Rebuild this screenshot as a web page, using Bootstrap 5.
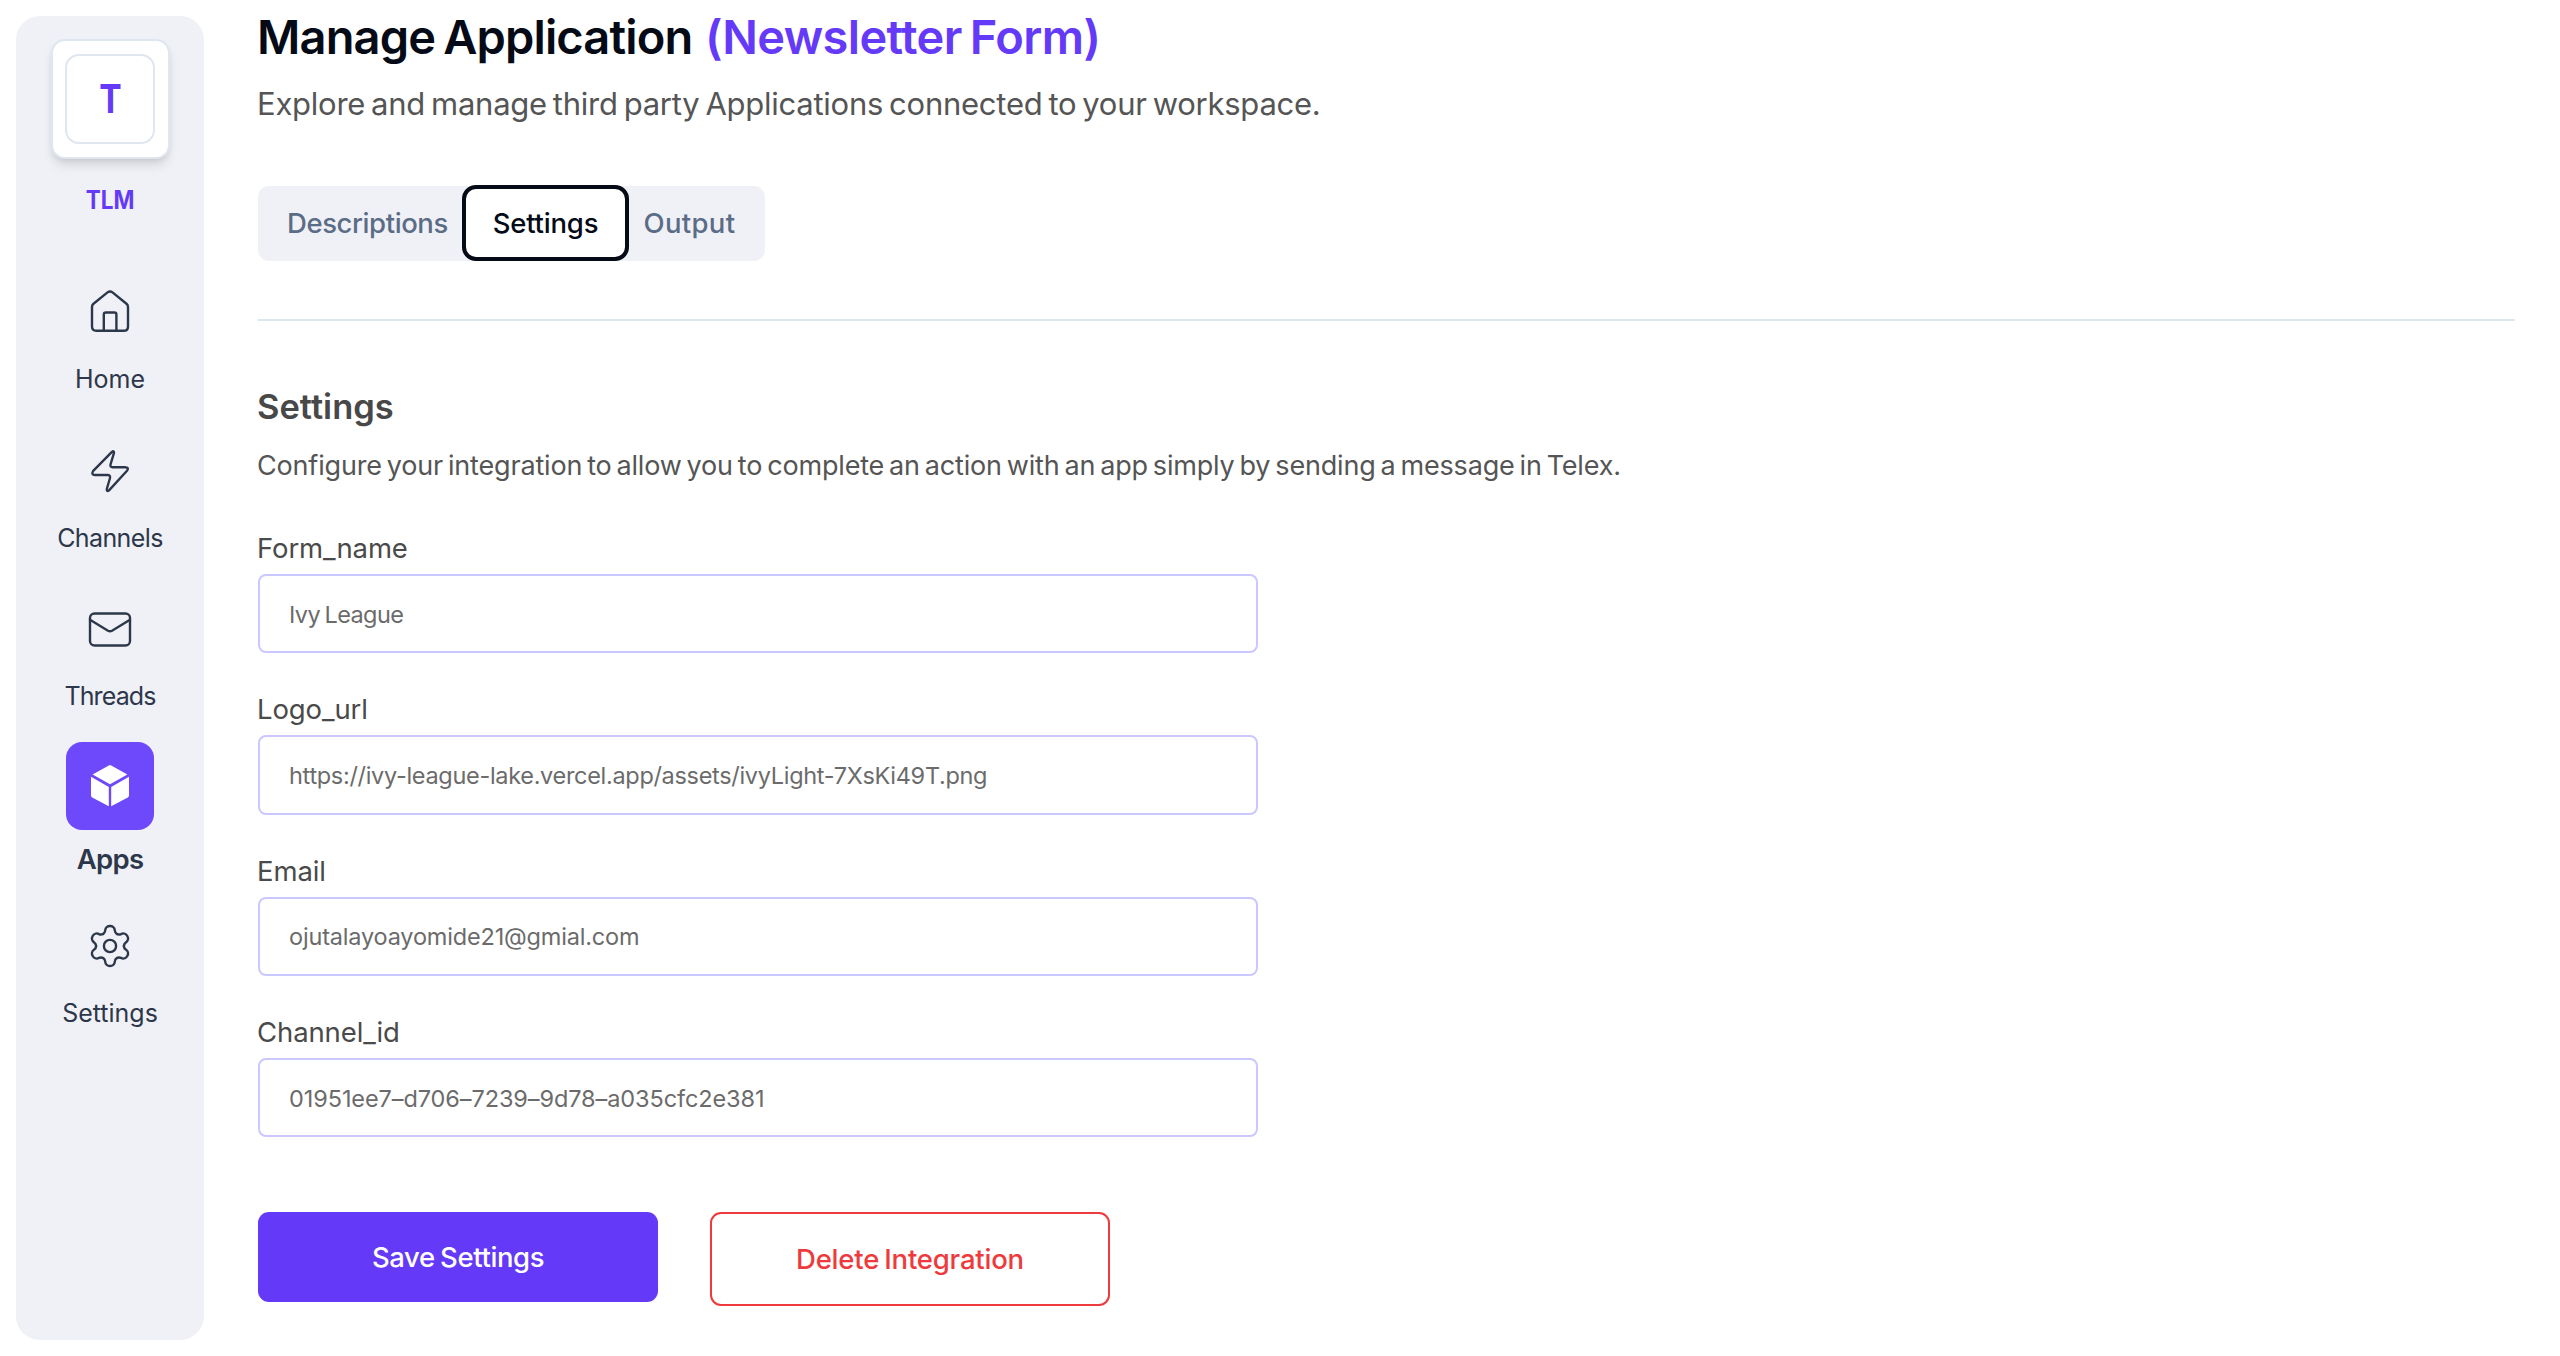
<!DOCTYPE html>
<html lang="en">
<head>
<meta charset="utf-8">
<meta name="viewport" content="width=device-width, initial-scale=1">
<title>Manage Application</title>
<link href="https://cdn.jsdelivr.net/npm/bootstrap@5.3.0/dist/css/bootstrap.min.css" rel="stylesheet">
<style>
  body { font-family: Inter, "Open Sans", sans-serif; background: #fff; color: #4a4a4a; height: 1356px; overflow: hidden; }
  .side-rail { width: 188px; height: 1324px; margin: 16px 54px 0 16px; padding-top: 23px; border-radius: 24px; background: #f0f1f6; color: #2d374b; }
  .org-card { width: 119px; height: 119.5px; border: 2px solid #dfe6f0; border-radius: 14px; box-shadow: 0 8px 12px -2px rgba(0,0,0,.11), 0 3px 6px -2px rgba(0,0,0,.1); }
  .org-inner { width: 90px; height: 90px; border: 2px solid #dfe6f0; border-radius: 14px; font-size: 40px; color: #643af8; }
  .org-inner span { transform: scaleX(.84); }
  .org-name { margin: 26.5px 0 51.5px; font-size: 25px; line-height: 30px; color: #643af8; transform: scaleX(.9); }
  .side-item { height: 158.5px; color: inherit; font-size: 25px; }
  .side-item:hover { color: inherit; }
  .side-item.current { height: 160px; }
  .icon-tile { width: 88px; height: 88px; border-radius: 16px; }
  .current .icon-tile { background: #6e48fb; color: #fff; }
  .icon-tile svg { width: 48px; height: 48px; fill: none; stroke: currentColor; stroke-width: 2.4; stroke-linejoin: round; stroke-linecap: round; }
  .side-text { margin-top: 9.5px; line-height: 30px; }
  .current .side-text { margin-top: 14px; font-size: 27.5px; font-weight: 600; letter-spacing: -.025em; }

  .page-title { height: 74px; line-height: 74px; font-size: 47px; font-weight: 600; color: #040a16; letter-spacing: -.85px; word-spacing: -3px; text-indent: -1px; }
  .page-title .app-name { color: #643af8; letter-spacing: -.65px; margin-left: 12.5px; }
  .page-desc { height: 59px; line-height: 59px; font-size: 31px; letter-spacing: -.25px; word-spacing: -2.5px; color: #555; margin-bottom: 53px; text-indent: -1px; }
  .tab-strip { width: 507px; height: 75px; border-radius: 11px; background: #f0f1f6; font-size: 27.5px; font-weight: 500; }
  .tab-strip .nav-link { padding: 0; line-height: 75px; color: #5b6c86; }
  .tab-strip .tab-a { width: 204px; padding-left: 29px; letter-spacing: -.015em; }
  .tab-strip .tab-b { width: 167px; height: 76px; margin-top: -1px; line-height: 69px; border: 4px solid #040a16; border-radius: 14px; background: #fff; color: #040a16; text-align: center; letter-spacing: -.007em; }
  .tab-strip .tab-c { padding-left: 14.5px; letter-spacing: .012em; }
  .divider { height: 2px; margin: 58px 45px 61.5px 0; background: #dde5f0; }
  .sect-title { height: 48px; line-height: 48px; font-size: 34.5px; font-weight: 600; color: #484848; margin-bottom: 15.5px; text-indent: -1px; }
  .sect-desc { height: 40px; line-height: 40px; font-size: 27px; letter-spacing: -.178px; word-spacing: -2.46px; color: #555; margin-bottom: 42px; text-indent: -1px; }
  .field { width: 1000px; height: 161.33px; }
  .field .form-label { display: block; height: 40px; line-height: 40px; margin-bottom: 6px; font-size: 27.5px; letter-spacing: -.004em; text-indent: -1px; }
  .field .form-control { height: 79.33px; padding: 1px 29px 0; border: 2px solid #cbc8ff; border-radius: 8px; font-size: 23.5px; color: #6b6b6b; }
  #form_name { letter-spacing: -.026em; word-spacing: -1.5px; }
  #logo_url { letter-spacing: -.0132em; }
  #email { letter-spacing: -.0076em; }
  #channel_id { letter-spacing: -.0039em; }
  .actions { margin-top: 38.5px; gap: 52px; }
  .actions .btn { width: 400px; border-radius: 11px; font-size: 27.5px; font-weight: 500; padding: 1px 0 0; }
  .actions .btn-save { height: 90px; background: #643af8; color: #fff; border: 0; letter-spacing: -.4px; word-spacing: -1.5px; }
  .actions .btn-remove { height: 94px; border: 2px solid #ee3a3c; color: #ee3a3c; background: #fff; letter-spacing: -.2px; word-spacing: -2px; }
</style>
</head>
<body>
<div class="d-flex">
  <nav class="side-rail d-flex flex-column align-items-center flex-shrink-0">
    <div class="org-card bg-white d-flex align-items-center justify-content-center flex-shrink-0">
      <div class="org-inner d-flex align-items-center justify-content-center fw-bold"><span>T</span></div>
    </div>
    <div class="org-name fw-bold">TLM</div>
    <a href="#" class="side-item d-flex flex-column align-items-center text-decoration-none">
      <span class="icon-tile d-flex align-items-center justify-content-center"><svg viewBox="0 .5 48 48"><path d="M21.5 5.9Q24 3.9 26.5 5.9L40.5 17.2Q42 18.4 42 20.5V40Q42 44.3 37.7 44.3H10.3Q6 44.3 6 40V20.5Q6 18.4 7.5 17.2Z"/><path d="M17.8 44V28Q17.8 26 19.8 26H28.4Q30.4 26 30.4 28V44"/></svg></span>
      <span class="side-text">Home</span>
    </a>
    <a href="#" class="side-item d-flex flex-column align-items-center text-decoration-none">
      <span class="icon-tile d-flex align-items-center justify-content-center"><svg viewBox="0 -2 48 48"><path d="M25.9 4.9L7 24.2Q5 28 9 28H21.5Q24.6 28 24 31L20.8 42Q20.6 45 22.8 43.6L41 23.8Q43.5 20.2 39 20.2H26.5Q24 20.2 24.5 17.5L28 5.8Q28 3.2 25.9 4.9Z"/></svg></span>
      <span class="side-text" style="letter-spacing:-.024em">Channels</span>
    </a>
    <a href="#" class="side-item d-flex flex-column align-items-center text-decoration-none">
      <span class="icon-tile d-flex align-items-center justify-content-center"><svg viewBox="0 -1.5 48 48"><rect x="4" y="8" width="40" height="32" rx="4.5"/><path d="M4 14.2L22 25.2Q24 26.3 26 25.2L44 14.2"/></svg></span>
      <span class="side-text" style="letter-spacing:-.035em">Threads</span>
    </a>
    <a href="#" class="side-item current d-flex flex-column align-items-center text-decoration-none">
      <span class="icon-tile d-flex align-items-center justify-content-center"><svg viewBox="0 0 48 48"><g fill="currentColor" stroke="none"><path d="M22.8 3.5Q24 2.7 25.2 3.5L41.4 12.6L24 22.2L6.6 12.6Z"/><path d="M5 14.8L22.8 25V44.2L6.2 35.4Q5 34.7 5 33.5Z"/><path d="M43 14.8L25.2 25V44.2L41.8 35.4Q43 34.7 43 33.5Z"/></g></svg></span>
      <span class="side-text">Apps</span>
    </a>
    <a href="#" class="side-item d-flex flex-column align-items-center text-decoration-none">
      <span class="icon-tile d-flex align-items-center justify-content-center"><svg viewBox="-24 -24 48 48"><defs><path id="tooth" d="M-7-12Q-5-13.2-4.8-15.5C-4.6-21.5 4.6-21.5 4.8-15.5Q5-13.2 7-12"/></defs><use href="#tooth"/><use href="#tooth" transform="rotate(60)"/><use href="#tooth" transform="rotate(120)"/><use href="#tooth" transform="rotate(180)"/><use href="#tooth" transform="rotate(240)"/><use href="#tooth" transform="rotate(300)"/><circle r="6.1"/></svg></span>
      <span class="side-text mt-2">Settings</span>
    </a>
  </nav>

  <main class="flex-grow-1">
    <h1 class="page-title m-0">Manage Application<span class="app-name">(Newsletter Form)</span></h1>
    <p class="page-desc">Explore and manage third party Applications connected to your workspace.</p>
    <div class="nav tab-strip flex-nowrap">
      <a class="nav-link tab-a" href="#">Descriptions</a>
      <a class="nav-link tab-b active" href="#">Settings</a>
      <a class="nav-link tab-c" href="#">Output</a>
    </div>
    <div class="divider"></div>
    <h2 class="sect-title mt-0">Settings</h2>
    <p class="sect-desc">Configure your integration to allow you to complete an action with an app simply by sending a message in Telex.</p>
    <form>
      <div class="field"><label class="form-label" for="form_name">Form_name</label><input class="form-control" id="form_name" value="Ivy League"></div>
      <div class="field"><label class="form-label" for="logo_url">Logo_url</label><input class="form-control" id="logo_url" value="https://ivy-league-lake.vercel.app/assets/ivyLight-7XsKi49T.png"></div>
      <div class="field"><label class="form-label" for="email">Email</label><input class="form-control" id="email" value="ojutalayoayomide21@gmial.com"></div>
      <div class="field"><label class="form-label" for="channel_id">Channel_id</label><input class="form-control" id="channel_id" value="01951ee7–d706–7239–9d78–a035cfc2e381"></div>
      <div class="actions d-flex align-items-start">
        <button type="button" class="btn btn-save">Save Settings</button>
        <button type="button" class="btn btn-remove">Delete Integration</button>
      </div>
    </form>
  </main>
</div>
<script src="https://cdn.jsdelivr.net/npm/bootstrap@5.3.0/dist/js/bootstrap.bundle.min.js"></script>
</body>
</html>
